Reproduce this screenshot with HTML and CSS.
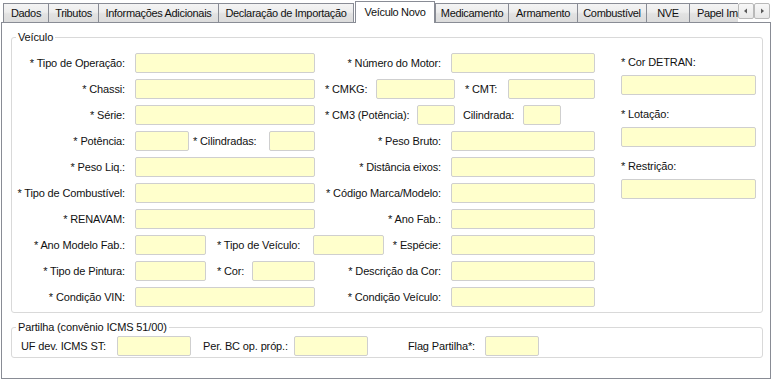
FILE: index.html
```html
<!DOCTYPE html>
<html lang="pt-BR">
<head>
<meta charset="utf-8">
<title>Veículo Novo</title>
<link rel="stylesheet" href="styles.css">
</head>
<body>
<div class="window">
  <div class="tabbar">
    <div class="tab t-dados">Dados</div>
    <div class="tab t-trib">Tributos</div>
    <div class="tab t-info">Informações Adicionais</div>
    <div class="tab t-decl">Declaração de Importação</div>
    <div class="tab tab-active t-veic">Veículo Novo</div>
    <div class="tab t-med">Medicamento</div>
    <div class="tab t-arm">Armamento</div>
    <div class="tab t-comb">Combustível</div>
    <div class="tab t-nve">NVE</div>
    <div class="tab tab-cut t-papel">Papel Importado</div>
    <div class="scroller">
      <span class="sbtn"><svg width="14" height="14" viewBox="0 0 14 14"><polygon points="8,4.5 5,7 8,9.5" fill="#5a5a5a"/></svg></span>
      <span class="sbtn"><svg width="14" height="14" viewBox="0 0 14 14"><polygon points="6,4.5 9,7 6,9.5" fill="#5a5a5a"/></svg></span>
    </div>
  </div>

  <div class="panel">
    <fieldset class="group g-veiculo">
      <legend>Veículo</legend>
      <div class="cols">
        <div class="main">
          <div class="row">
            <span class="lab la">* Tipo de Operação:</span><input class="in w180" type="text">
            <span class="lab lb">* Número do Motor:</span><input class="in w144" type="text">
          </div>
          <div class="row">
            <span class="lab la">* Chassi:</span><input class="in w180" type="text">
            <span class="lab l-cmkg">* CMKG:</span><input class="in w79" type="text">
            <span class="lab l-cmt">* CMT:</span><input class="in w87" type="text">
          </div>
          <div class="row">
            <span class="lab la">* Série:</span><input class="in w180" type="text">
            <span class="lab l-cm3">* CM3 (Potência):</span><input class="in w38" type="text">
            <span class="lab l-cil">Cilindrada:</span><input class="in w38" type="text">
          </div>
          <div class="row">
            <span class="lab la">* Potência:</span><input class="in w54" type="text">
            <span class="lab l-cils">* Cilindradas:</span><input class="in w46" type="text">
            <span class="lab lb">* Peso Bruto:</span><input class="in w144" type="text">
          </div>
          <div class="row">
            <span class="lab la">* Peso Liq.:</span><input class="in w180" type="text">
            <span class="lab lb">* Distância eixos:</span><input class="in w144" type="text">
          </div>
          <div class="row">
            <span class="lab la">* Tipo de Combustível:</span><input class="in w180" type="text">
            <span class="lab lb">* Código Marca/Modelo:</span><input class="in w144" type="text">
          </div>
          <div class="row">
            <span class="lab la">* RENAVAM:</span><input class="in w180" type="text">
            <span class="lab lb">* Ano Fab.:</span><input class="in w144" type="text">
          </div>
          <div class="row">
            <span class="lab la">* Ano Modelo Fab.:</span><input class="in w71" type="text">
            <span class="lab l-tveic">* Tipo de Veículo:</span><input class="in w71" type="text">
            <span class="lab l-esp">* Espécie:</span><input class="in w144" type="text">
          </div>
          <div class="row">
            <span class="lab la">* Tipo de Pintura:</span><input class="in w71" type="text">
            <span class="lab l-cor">* Cor:</span><input class="in w63" type="text">
            <span class="lab lb">* Descrição da Cor:</span><input class="in w144" type="text">
          </div>
          <div class="row">
            <span class="lab la">* Condição VIN:</span><input class="in w180" type="text">
            <span class="lab lb">* Condição Veículo:</span><input class="in w144" type="text">
          </div>
        </div>
        <div class="side">
          <span class="side-lab">* Cor DETRAN:</span>
          <input class="in w135" type="text">
          <span class="side-lab side-gap">* Lotação:</span>
          <input class="in w135" type="text">
          <span class="side-lab side-gap">* Restrição:</span>
          <input class="in w135" type="text">
        </div>
      </div>
    </fieldset>

    <fieldset class="group g-partilha">
      <legend>Partilha (convênio ICMS 51/00)</legend>
      <div class="prow">
        <span class="lab lp1">UF dev. ICMS ST:</span><input class="in w74" type="text">
        <span class="lab lp2">Per. BC op. próp.:</span><input class="in w74" type="text">
        <span class="lab lp3">Flag Partilha*:</span><input class="in w54" type="text">
      </div>
    </fieldset>
  </div>
</div>
</body>
</html>
```

FILE: styles.css
```css
html, body {
  margin: 0;
  padding: 0;
  background: #ffffff;
}

body {
  font-family: "Liberation Sans", Arial, sans-serif;
  font-size: 11px;
  letter-spacing: -0.14px;
  color: #111111;
}

.window {
  width: 774px;
  height: 380px;
}

/* ---------- tab strip ---------- */
.tabbar {
  display: flex;
  align-items: flex-end;
  height: 22px;
  padding-left: 3px;
  box-sizing: border-box;
}

.tab {
  flex: none;
  box-sizing: border-box;
  height: 19px;
  margin-left: -1px;
  border: 1px solid #898c95;
  border-bottom: none;
  background: linear-gradient(to bottom, #f4f4f4 0%, #ededed 45%, #e2e2e2 55%, #dcdcdc 100%);
  text-align: center;
  line-height: 18px;
  letter-spacing: -0.33px;
  white-space: nowrap;
  overflow: hidden;
}

.tab:first-child {
  margin-left: 0;
}

.tab-active {
  position: relative;
  z-index: 1;
  height: 22px;
  margin-bottom: -1px;
  margin-left: 1px;
  background: #ffffff;
  line-height: 20px;
}

.tab-active + .tab {
  margin-left: 0;
}

.tab-cut {
  border-right: none;
  text-align: left;
  padding-left: 7px;
}

.t-dados { width: 46px; }
.t-trib  { width: 51px; }
.t-info  { width: 121px; }
.t-decl  { width: 136px; }
.t-veic  { width: 80px; }
.t-med   { width: 74px; }
.t-arm   { width: 70px; }
.t-comb  { width: 70px; }
.t-nve   { width: 44px; }
.t-papel { width: 49px; }

.scroller {
  display: flex;
  align-self: flex-start;
  margin-top: 3px;
}

.sbtn {
  display: flex;
  width: 16px;
  height: 16px;
  box-sizing: border-box;
  border: 1px solid #b9b9b9;
  border-radius: 2px;
  background: linear-gradient(to bottom, #f8f8f8, #e7e7e7);
}

/* ---------- panel ---------- */
.panel {
  margin-left: 1px;
  width: 770px;
  height: 357px;
  box-sizing: border-box;
  border: 1px solid #898c95;
  background: #ffffff;
  padding-left: 9px;
}

.group {
  width: 752px;
  min-width: 0;
  box-sizing: border-box;
  margin: 0;
  border: 1px solid #d9d9d9;
  border-radius: 3px;
}

.group legend {
  margin-left: 4px;
  padding: 0 2px;
  line-height: 14px;
}

.g-veiculo {
  margin-top: 7px;
  padding: 6px 0 2px 0;
}

.g-partilha {
  margin-top: 7px;
  padding: 1px 0 0 0;
}

.cols {
  display: flex;
}

.main {
  width: 583px;
  flex: none;
}

.row {
  display: flex;
  align-items: center;
  height: 26px;
}

.lab {
  flex: none;
  box-sizing: border-box;
  white-space: nowrap;
}

.la { width: 123px; text-align: right; padding-right: 10px; }
.lb { width: 136px; text-align: right; padding-right: 10px; }
.l-cmkg  { width: 61px;  padding-left: 10px; }
.l-cmt   { width: 53px;  padding-left: 10px; }
.l-cm3   { width: 102px; padding-left: 10px; }
.l-cil   { width: 68px;  padding-left: 8px; }
.l-cils  { width: 80px;  padding-left: 4px; }
.l-tveic { width: 107px; padding-left: 11px; }
.l-esp   { width: 67px;  text-align: right; padding-right: 10px; }
.l-cor   { width: 46px;  padding-left: 11px; }

.side {
  flex: none;
  width: 135px;
  margin-left: 26px;
  display: flex;
  flex-direction: column;
}

.side-lab {
  display: block;
  height: 25px;
  line-height: 25px;
  white-space: nowrap;
}

.side-gap {
  padding-top: 7px;
}

.prow {
  display: flex;
  align-items: center;
  height: 22px;
}

.lp1 { width: 105px; padding-left: 9px; }
.lp2 { width: 103px; padding-left: 12px; }
.lp3 { width: 117px; text-align: right; padding-right: 10px; }

/* ---------- inputs ---------- */
.in {
  flex: none;
  box-sizing: border-box;
  height: 20px;
  margin: 0;
  padding: 0;
  border: 1px solid #cfcfcf;
  border-radius: 2px;
  background: #ffffcc;
  font: inherit;
  outline: none;
}

.w180 { width: 180px; }
.w144 { width: 144px; }
.w135 { width: 135px; }
.w87  { width: 87px; }
.w79  { width: 79px; }
.w74  { width: 74px; }
.w71  { width: 71px; }
.w63  { width: 63px; }
.w54  { width: 54px; }
.w46  { width: 46px; }
.w38  { width: 38px; }
```
